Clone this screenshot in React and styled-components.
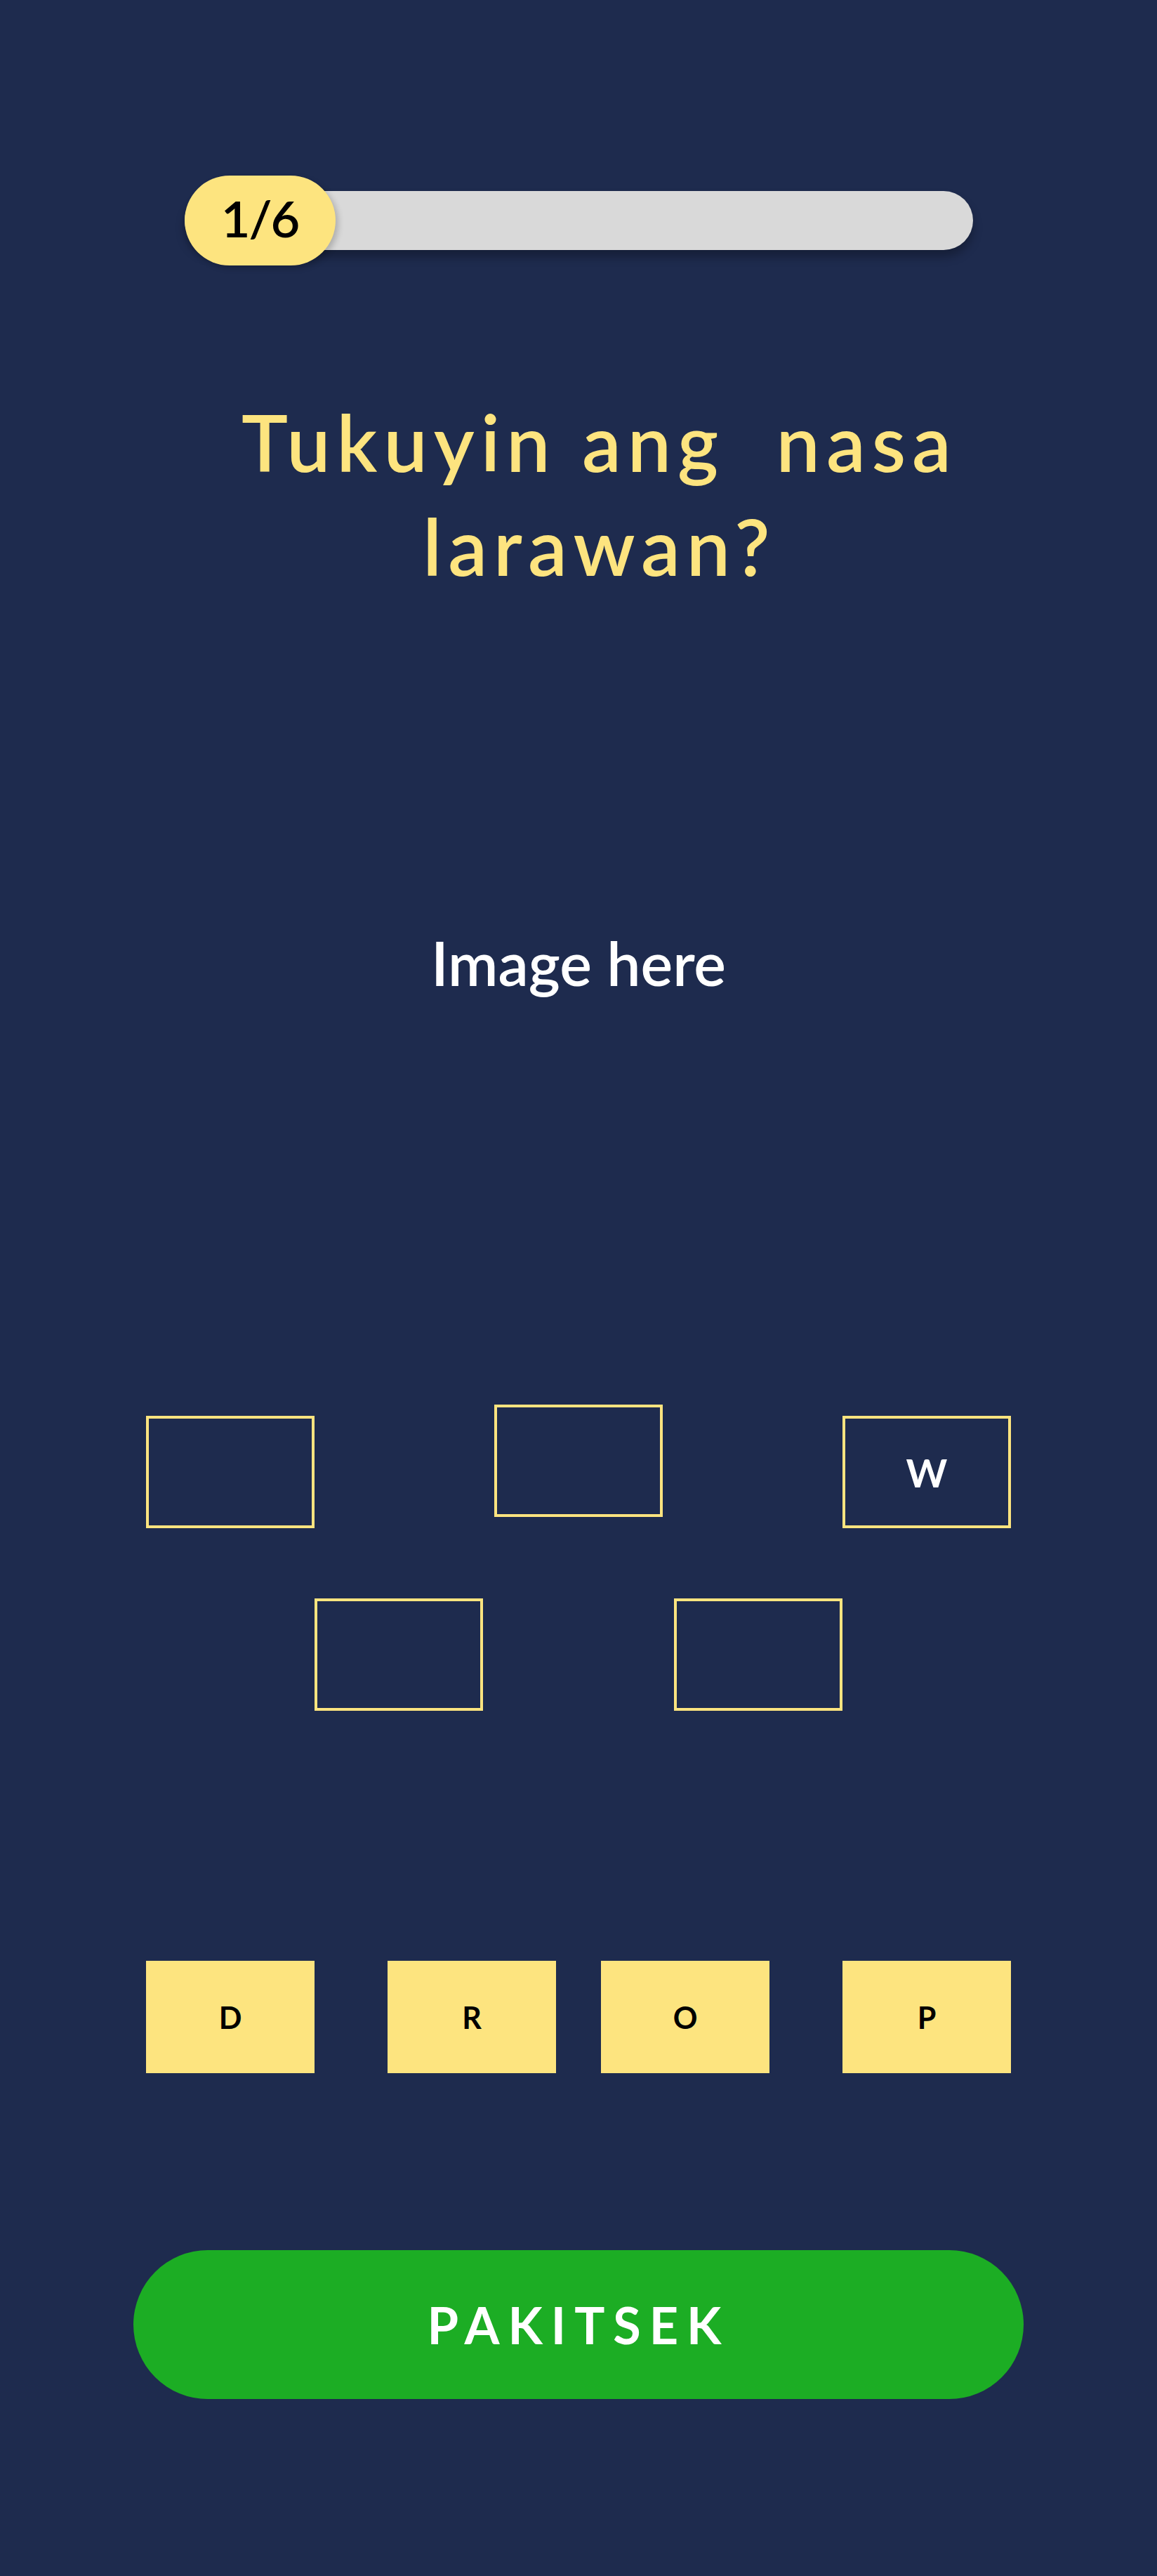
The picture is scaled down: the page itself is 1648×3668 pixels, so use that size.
import styled, { createGlobalStyle } from 'styled-components';

const navy = '#1e2b4e';
const yellow = '#fde47f';
const gray = '#d9d9d9';
const green = '#1cad24';

const GlobalStyle = createGlobalStyle`
    body {
        margin: 0;
        background: ${navy};
        font-family: Lato, "Open Sans", sans-serif;
    }
    * {
        box-sizing: border-box;
    }
`;

const Screen = styled.div`
    min-height: 3668px;
    background: ${navy};
    display: flex;
    flex-direction: column;
    align-items: center;
`;

const ProgressBar = styled.div`
    margin-top: 272px;
    width: 1123px;
    height: 84px;
    border-radius: 42px;
    background: ${gray};
    display: flex;
    align-items: center;
    box-shadow: 0 10px 14px rgba(0, 0, 0, 0.28);
`;

const Counter = styled.div`
    width: 215px;
    height: 128px;
    flex-shrink: 0;
    border-radius: 64px;
    background: ${yellow};
    display: flex;
    align-items: center;
    justify-content: center;
    padding-bottom: 8px;
    font-size: 72px;
    font-weight: 600;
    letter-spacing: -2px;
    color: #000;
    box-shadow: 4px 4px 8px rgba(0, 0, 0, 0.2);
`;

const Question = styled.h1`
    margin: 199px 0 0;
    padding-left: 60px;
    font-size: 111px;
    line-height: 148px;
    font-weight: 600;
    letter-spacing: 9px;
    color: ${yellow};
    text-align: center;
`;

const ImageArea = styled.div`
    margin-top: 468px;
    font-size: 86px;
    line-height: 1.2;
    font-weight: 600;
    color: #fff;
`;

const SlotRow = styled.div`
    display: flex;
    align-items: flex-start;
    justify-content: ${({ $spread }) => ($spread ? 'space-between' : 'center')};
    gap: ${({ $spread }) => ($spread ? 0 : 272)}px;
    width: 1232px;
    margin-top: ${({ $top }) => $top}px;
`;

const Slot = styled.div`
    width: 240px;
    height: 160px;
    flex-shrink: 0;
    margin-top: ${({ $low }) => ($low ? 16 : 0)}px;
    border: 4px solid ${yellow};
    display: flex;
    align-items: center;
    justify-content: center;
    font-size: 56px;
    font-weight: 700;
    color: #fff;
`;

const TileRow = styled.div`
    margin-top: 356px;
    width: 1232px;
    display: flex;
    justify-content: space-between;
`;

const TileGroup = styled.div`
    display: flex;
    gap: 64px;
`;

const Tile = styled.div`
    width: 240px;
    height: 160px;
    background: ${yellow};
    display: flex;
    align-items: center;
    justify-content: center;
    font-size: 43px;
    font-weight: 700;
    color: #000;
`;

const CheckButton = styled.button`
    margin-top: 252px;
    width: 1268px;
    height: 212px;
    border: none;
    border-radius: 106px;
    background: ${green};
    color: #fff;
    font-family: Lato, "Open Sans", sans-serif;
    font-size: 72px;
    font-weight: 700;
    letter-spacing: 12px;
    cursor: pointer;
`;

export default function App() {
    return (
        <>
            <GlobalStyle />
            <Screen>
                <ProgressBar>
                    <Counter>1/6</Counter>
                </ProgressBar>

                <Question>
                    {'Tukuyin ang\u00a0 nasa'}
                    <br />
                    larawan?
                </Question>

                <ImageArea>Image here</ImageArea>

                <SlotRow $spread $top={578}>
                    <Slot $low />
                    <Slot />
                    <Slot $low>W</Slot>
                </SlotRow>
                <SlotRow $top={100}>
                    <Slot />
                    <Slot />
                </SlotRow>

                <TileRow>
                    <Tile>D</Tile>
                    <TileGroup>
                        <Tile>R</Tile>
                        <Tile>O</Tile>
                    </TileGroup>
                    <Tile>P</Tile>
                </TileRow>

                <CheckButton>PAKITSEK</CheckButton>
            </Screen>
        </>
    );
}
